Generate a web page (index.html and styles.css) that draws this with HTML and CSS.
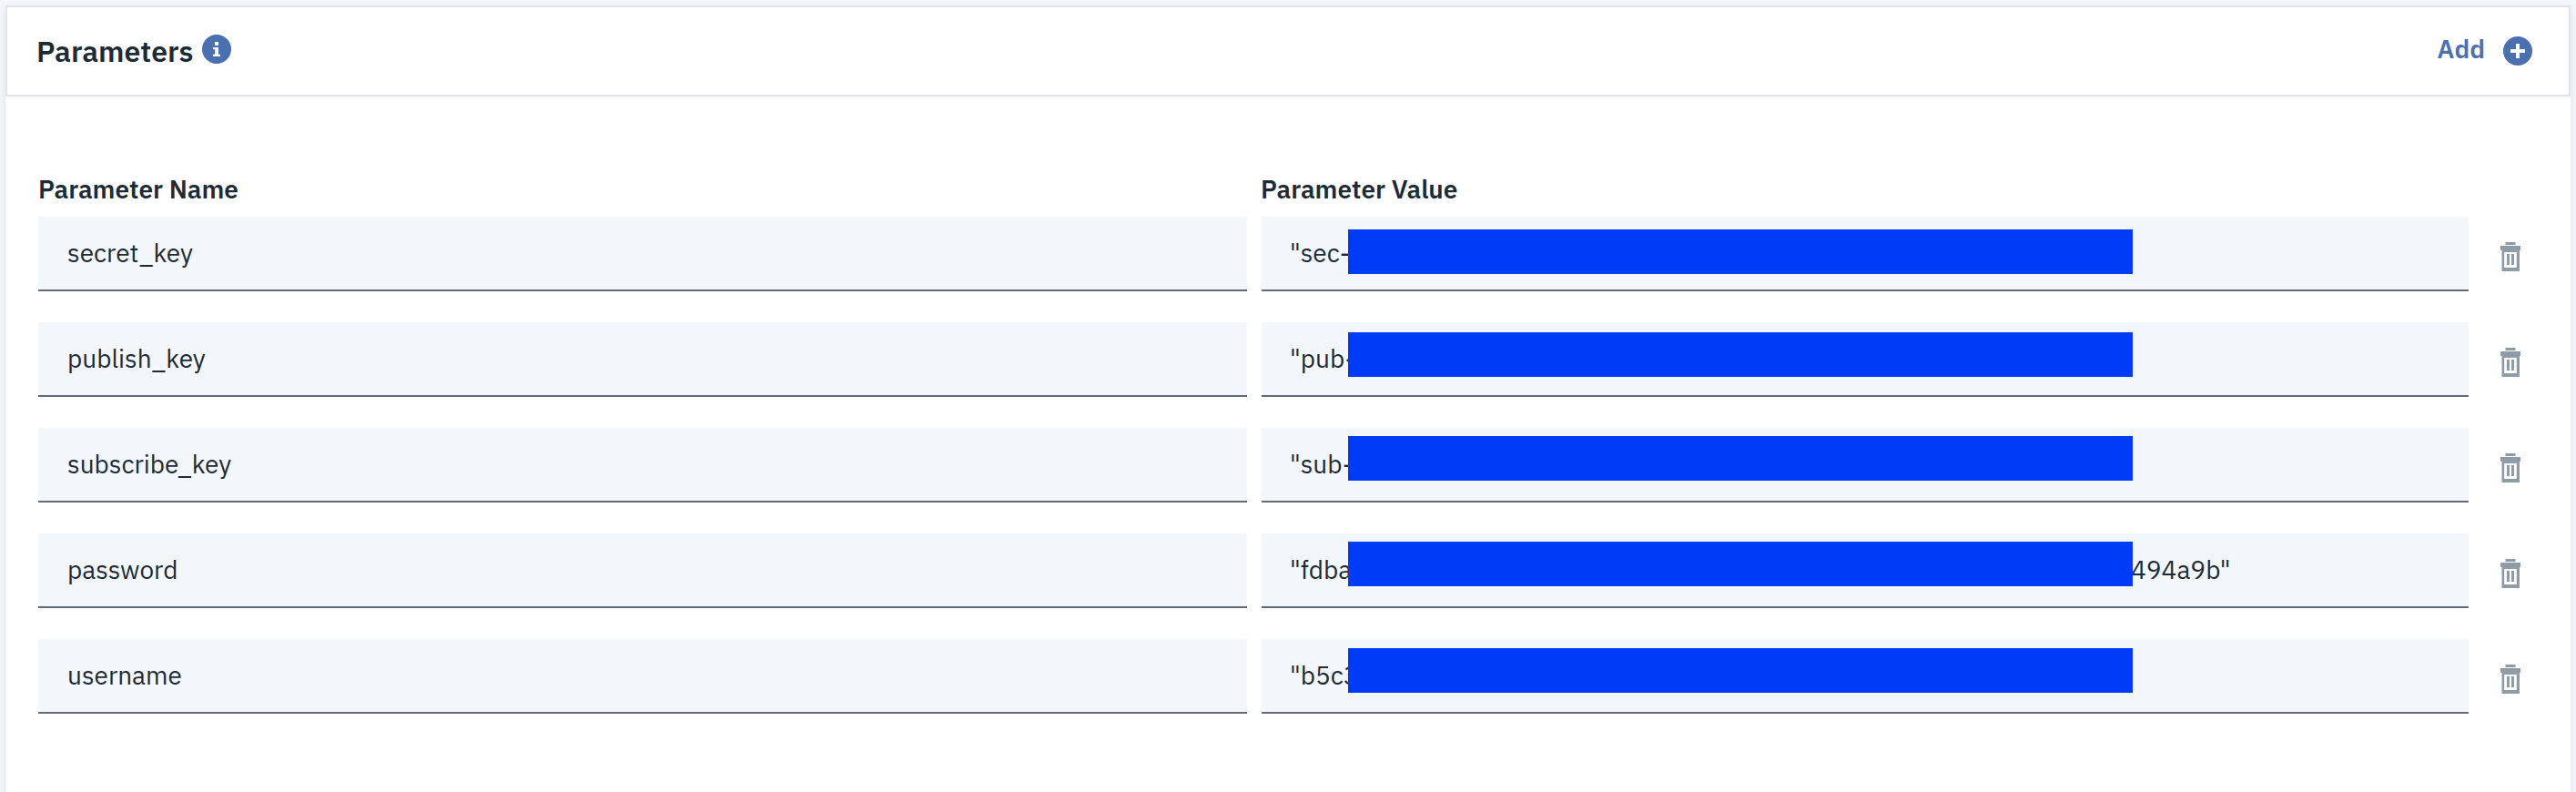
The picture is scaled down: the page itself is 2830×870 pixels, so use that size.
FILE: index.html
```html
<!DOCTYPE html>
<html lang="en">
<head>
<meta charset="utf-8">
<title>Parameters</title>
<link rel="stylesheet" href="styles.css">
</head>
<body>
<svg class="defs" width="0" height="0">
  <symbol id="trash" viewBox="0 0 22 32">
    <path fill="#8f9ba6" fill-rule="evenodd" d="M5.500 0h11v3h-11zM0 4h22v5h-1v23H1.500V9H0zM4.200 11v17h13.600V11zM7 13h3v12H7zM12 13h3v12h-3z"/>
  </symbol>
</svg>
<main class="panel">
  <header class="head">
    <h1 class="title">Parameters</h1>
    <svg class="info" viewBox="0 0 32 32"><circle cx="16" cy="16" r="16" fill="#4a70b0"/><path fill="#fff" d="M14 8h4v4h-4zM12 14h6v7.700h2V24h-8v-2.300h2.200v-5.400H12z"/></svg>
    <button class="add"><span>Add</span>
      <svg class="plus" viewBox="0 0 32 32"><circle cx="16" cy="16" r="16" fill="#4a70b0"/><path fill="#fff" d="M14 8h4v6h6v4h-6v6h-4v-6H8v-4h6z"/></svg>
    </button>
  </header>
  <section class="grid">
    <div class="label">Parameter Name</div><div class="label value-label">Parameter Value</div><div></div>

    <div class="field">secret_key</div>
    <div class="field value"><span class="start">"sec-</span><i class="mask m1"></i></div>
    <svg class="trash"><use href="#trash"/></svg>

    <div class="field">publish_key</div>
    <div class="field value"><span class="start">"pub-</span><i class="mask m2"></i></div>
    <svg class="trash"><use href="#trash"/></svg>

    <div class="field">subscribe_key</div>
    <div class="field value"><span class="start">"sub-</span><i class="mask m3"></i></div>
    <svg class="trash"><use href="#trash"/></svg>

    <div class="field">password</div>
    <div class="field value"><span class="start">"fdba</span><i class="mask m3"></i><span>494a9b"</span></div>
    <svg class="trash"><use href="#trash"/></svg>

    <div class="field">username</div>
    <div class="field value"><span class="start">"b5c3</span><i class="mask m4"></i></div>
    <svg class="trash"><use href="#trash"/></svg>
  </section>
</main>
</body>
</html>
```
FILE: styles.css
```css
* { box-sizing: border-box; }
body {
  margin: 0;
  height: 870px;
  padding: 6px 6px 0;
  overflow: hidden;
  background: #f3f7fc;
  color: #1d2b36;
  font-family: "IBM Plex Sans", Roboto, sans-serif;
  font-size: 28px;
}
.defs { position: absolute; }
.panel {
  height: 900px;
  background: #fff;
  box-shadow: 0 4px 8px rgba(40, 60, 80, .1);
}
.head {
  display: flex;
  align-items: flex-start;
  height: 100px;
  padding: 0 40px 0 32px;
  border: 2px solid #dfe5ea;
}
.title {
  margin: 28px 0 0;
  font-size: 32px;
  line-height: 40px;
  font-weight: 600;
  width: 182px;
}
.info { width: 32px; height: 32px; margin-top: 30px; }
.add {
  display: flex;
  margin: 32px 0 0 auto;
  padding: 0;
  gap: 20px;
  border: 0;
  background: none;
  color: #4a70b0;
  font: 600 28px/32px "IBM Plex Sans", Roboto, sans-serif;
}
.add span { margin-top: -2px; }
.plus { width: 32px; height: 32px; }
.grid {
  display: grid;
  grid-template-columns: 1328px 1326px 22px;
  grid-template-rows: 12px;
  grid-auto-rows: 82px;
  column-gap: 16px;
  row-gap: 34px;
  padding: 86px 0 0 36px;
}
.label {
  height: 32px;
  line-height: 32px;
  font-weight: 600;
  white-space: nowrap;
}
.value-label { margin-left: -1px; }
.field {
  position: relative;
  display: flex;
  padding: 24px 32px 0;
  line-height: 32px;
  background: #f3f7fc;
  border-bottom: 2px solid #5f6a75;
}
.value { padding-left: 31px; }
.start { width: 924px; }
.mask {
  position: absolute;
  left: 95px;
  width: 862px;
  height: 49px;
  background: #003cf8;
}
.m1 { top: 14px; }
.m2 { top: 11px; }
.m3 { top: 9px; }
.m4 { top: 10px; }
.trash { width: 22px; height: 32px; margin: 28px 0 0 19px; }
```
